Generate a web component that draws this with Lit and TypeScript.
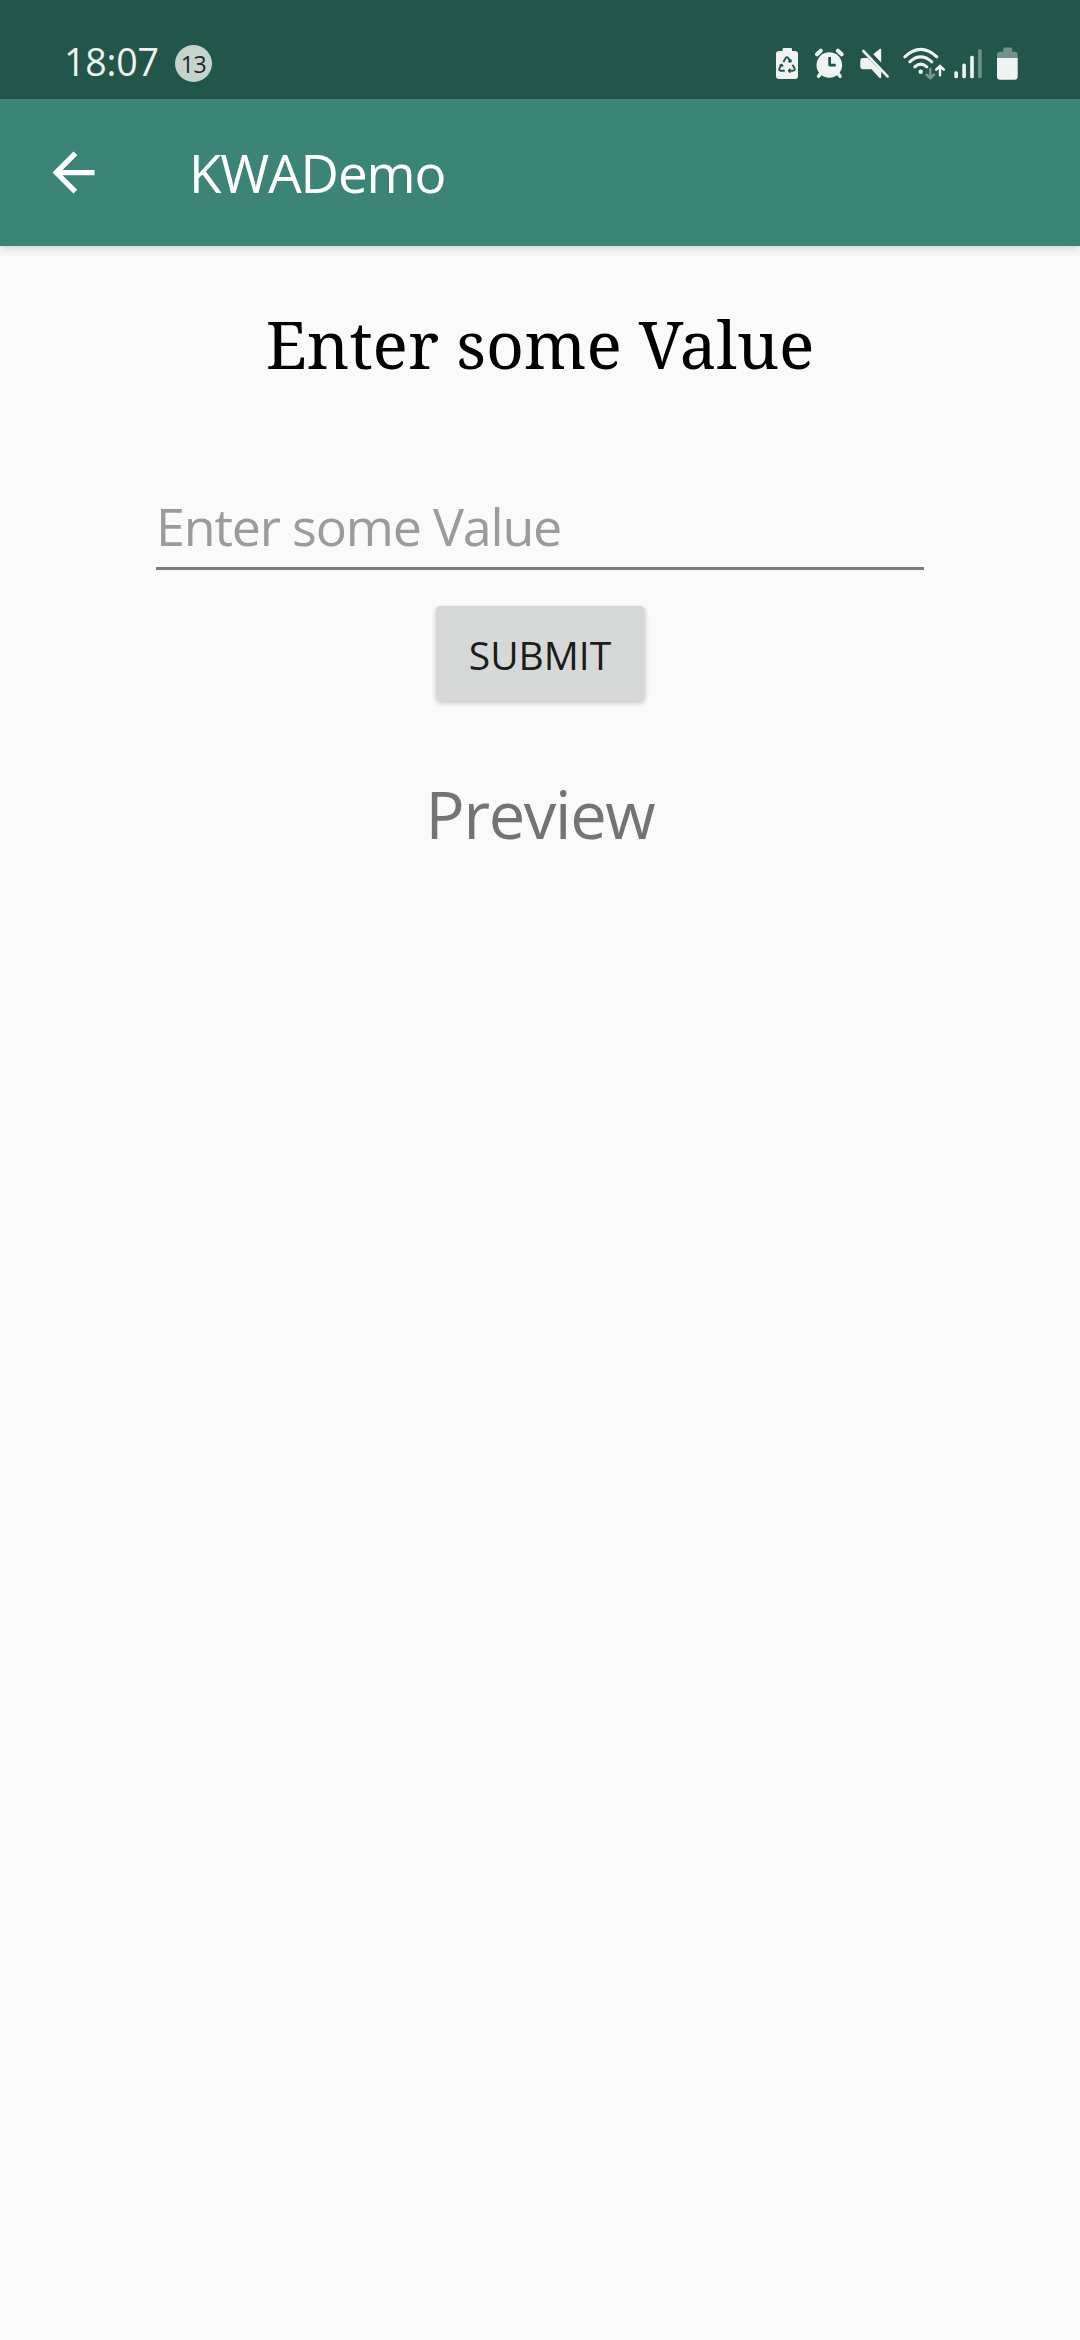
import { LitElement, html, css, svg } from "lit";
import { customElement, property } from "lit/decorators.js";

@customElement("status-bar")
class StatusBar extends LitElement {
  @property() time = "";
  @property() count = "";

  static styles = css`
    :host {
      display: flex;
      align-items: flex-start;
      height: 99px;
      background: #23564a;
      color: #eff3f2;
      padding: 0 60px 0 64px;
      box-sizing: border-box;
    }
    .time {
      font-size: 37.5px;
      line-height: 44px;
      margin-top: 40px;
      width: 111px;
      letter-spacing: -0.2px;
    }
    .badge {
      width: 37px;
      height: 37px;
      margin-top: 45px;
      border-radius: 50%;
      background: #c5d3cf;
      color: #262626;
      font-size: 23px;
      line-height: 38px;
      text-align: center;
      letter-spacing: -0.5px;
    }
    .icons {
      margin-left: auto;
      margin-top: 46px;
      display: flex;
      gap: 8px;
    }
    svg {
      display: block;
      height: 36px;
    }
    .fill { fill: #eff3f2; }
    .dim { fill: #6f928a; }
    .line { fill: none; stroke: #eff3f2; stroke-linecap: round; stroke-linejoin: round; }
    .dimline { fill: none; stroke: #7b9b94; stroke-linecap: round; stroke-linejoin: round; }
    .cut { fill: none; stroke: #23564a; stroke-linejoin: round; }
  `;

  private icon(x: number, w: number, body: unknown) {
    return html`<svg width=${w} height="36" viewBox="${x} 46 ${w} 36">${body}</svg>`;
  }

  render() {
    return html`
      <span class="time">${this.time}</span>
      <span class="badge">${this.count}</span>
      <div class="icons">
        ${this.icon(774, 32, svg`
          <path class="fill" d="M783.600 48h7.400q1 0 1 1v2h3q3 0 3 3v22q0 3-3 3h-16q-3 0-3-3V54q0-3 3-3h3.600v-2q0-1 1-1z"/>
          <path class="cut" stroke-width="1.900" d="M783.400 62l2.300-4q1.200-1.600 2.500 0l2.400 4M792.500 64.800l2 3.600q.7 2.200-1.500 2.400h-4.300M784.800 70.800h-4q-2.200-.2-1.300-2.400l2.100-3.700"/>
          <path class="cut" stroke-width="1.500" d="M788.300 61.700h2.600v-2.500M790.500 68.800l-2 2 2 2M779.500 65.600l2.200-1.200 1.300 2.100"/>`)}
        ${this.icon(814, 36, svg`
          <circle class="fill" cx="829.300" cy="65" r="12.800"/>
          <path class="line" stroke-width="4" d="M817 54.300l3.800-3.600M837.900 50.700l3.800 3.600"/>
          <path class="line" stroke-width="3.500" d="M821 73l-2.400 3.300M837.700 73l2.400 3.300"/>
          <path class="cut" stroke-width="2.700" d="M829.600 57v8.100h6.100"/>`)}
        ${this.icon(858, 37, svg`
          <path class="fill" d="M873.300 54.300l6.300-5.300q1.600-.8 1.600 1v12.600zM863 58h4.800l13.400 13.600v5.700q-.2 1.400-1.600.6L871.500 69.300H863q-2.700 0-2.700-2.700v-5.900Q860.300 58 863 58z"/>
          <path class="line" stroke-width="2.700" d="M863.300 51l24.200 25.400"/>`)}
        ${this.icon(903, 42, svg`
          <path class="line" stroke-width="3" d="M904.800 56.800q15.900-14.800 32 0M909.800 61.800q10.900-9.800 22 0M914.800 66.800q5.900-5.400 12 0"/>
          <circle class="fill" cx="920.700" cy="71.800" r="2.200"/>
          <path class="dimline" stroke-width="2.400" d="M930.300 69v9M926.600 74.600l3.700 3.700 3.700-3.700"/>
          <path class="line" stroke-width="2.500" d="M940 75.300v-9.300M936.200 69.600l3.800-3.800 3.800 3.800"/>`)}
        ${this.icon(953, 34, svg`
          <rect class="fill" x="954.300" y="71.300" width="3.700" height="6.900" rx="1.500"/>
          <rect class="fill" x="962.300" y="63.400" width="3.600" height="14.800" rx="1.500"/>
          <rect class="fill" x="970.200" y="55.700" width="3.600" height="22.500" rx="1.500"/>
          <rect class="dim" x="978.100" y="49" width="3.600" height="29.200" rx="1.500"/>`)}
        ${this.icon(995, 25, svg`
          <path class="dim" d="M1004.600 47.500h6.200q1.400 0 1.400 1.400v2.800h2.500q3 0 3 3V58H997v-3.300q0-3 3-3h3.200v-2.800q0-1.400 1.400-1.400z"/>
          <path class="fill" d="M997 58h20.700v18.700q0 3-3 3H1000q-3 0-3-3z"/>`)}
      </div>
    `;
  }
}

@customElement("app-bar")
class AppBar extends LitElement {
  @property() heading = "";

  static styles = css`
    :host {
      display: flex;
      align-items: center;
      height: 147px;
      box-sizing: border-box;
      padding-left: 42px;
      background: #3b8477;
      color: #fff;
      box-shadow: 0 2px 10px rgba(0, 0, 0, 0.18);
    }
    .back { display: block; width: 63px; height: 63px; fill: #fff; }
    .heading {
      margin-left: 84px;
      font-size: 53px;
      line-height: 72px;
      letter-spacing: -1.1px;
    }
  `;

  render() {
    return html`
      <svg class="back" viewBox="0 0 24 24">
        <path d="M20 11H7.830l5.590-5.590L12 4l-8 8 8 8 1.410-1.410L7.830 13H20v-2z"/>
      </svg>
      <span class="heading">${this.heading}</span>
    `;
  }
}

@customElement("app-root")
class AppRoot extends LitElement {
  static styles = css`
    :host {
      display: flex;
      flex-direction: column;
      height: 2340px;
      background: #fafafa;
      font-family: "Open Sans", "Noto Sans", sans-serif;
    }
    .content {
      display: flex;
      flex-direction: column;
      align-items: center;
    }
    .title {
      margin: 52px 0 0;
      font: 400 66px/90px "Noto Serif", "DejaVu Serif Condensed", "DejaVu Serif", serif;
      color: #000;
      white-space: nowrap;
    }
    .field {
      width: 768px;
      height: 90px;
      margin-top: 92px;
      border-bottom: 3px solid #7b7b7b;
      box-sizing: border-box;
      font-size: 52px;
      line-height: 92px;
      letter-spacing: -1.2px;
      color: #9b9b9b;
    }
    .submit {
      width: 209px;
      height: 95px;
      margin-top: 36px;
      padding: 0;
      border: 0;
      border-radius: 5px;
      background: #d6d8d7;
      box-shadow: 0 2px 5px rgba(0, 0, 0, 0.22);
      font: inherit;
      font-size: 39px;
      line-height: 97px;
      color: #1c1c1c;
    }
    .preview {
      margin-top: 68px;
      font-size: 65px;
      line-height: 90px;
      letter-spacing: -1.3px;
      color: #737373;
    }
  `;

  render() {
    return html`
      <status-bar time="18:07" count="13"></status-bar>
      <app-bar heading="KWADemo"></app-bar>
      <main class="content">
        <h1 class="title">Enter some Value</h1>
        <div class="field">Enter some Value</div>
        <button class="submit">SUBMIT</button>
        <div class="preview">Preview</div>
      </main>
    `;
  }
}
